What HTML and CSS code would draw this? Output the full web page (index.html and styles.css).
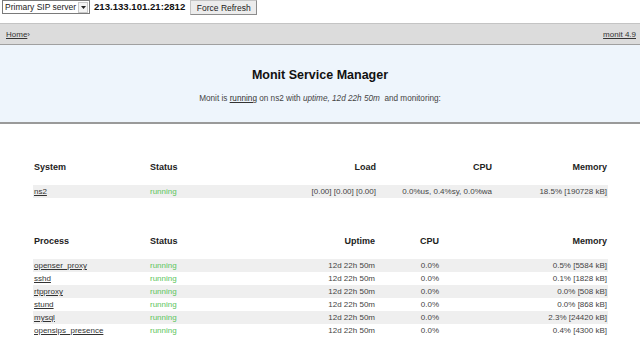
FILE: index.html
```html
<!DOCTYPE html>
<html lang="en">
<head>
    <meta charset="UTF-8">
    <title>Monit Service Manager</title>
    <link rel="stylesheet" href="styles.css">
</head>
<body>

<div class="topbar">
    <div class="server-select">
        <span class="server-name">Primary SIP server</span>
        <span class="select-arrow">
            <svg width="5" height="3" viewBox="0 0 5 3"><path d="M0 0h5L2.5 3z" fill="#222"/></svg>
        </span>
    </div>
    <span class="host">213.133.101.21:2812</span>
    <button class="refresh">Force Refresh</button>
</div>

<div class="nav">
    <span><a href="#">Home</a>&rsaquo;</span>
    <a href="#">monit 4.9</a>
</div>

<div class="hero">
    <h1>Monit Service Manager</h1>
    <p>Monit is <a href="#">running</a> on ns2 with <i>uptime, 12d 22h 50m</i> &nbsp;and monitoring:</p>
</div>

<table class="status system">
    <colgroup>
        <col style="width:116px"><col style="width:111px"><col style="width:117px"><col style="width:116px"><col style="width:115px">
    </colgroup>
    <thead>
        <tr><th>System</th><th>Status</th><th class="num">Load</th><th class="num">CPU</th><th class="num">Memory</th></tr>
    </thead>
    <tbody>
        <tr><td><a href="#">ns2</a></td><td class="ok">running</td><td class="num">[0.00] [0.00] [0.00]</td><td class="num">0.0%us, 0.4%sy, 0.0%wa</td><td class="num">18.5% [190728 kB]</td></tr>
    </tbody>
</table>

<table class="status process">
    <colgroup>
        <col style="width:116px"><col style="width:111px"><col style="width:116px"><col style="width:64px"><col style="width:168px">
    </colgroup>
    <thead>
        <tr><th>Process</th><th>Status</th><th class="num">Uptime</th><th class="num">CPU</th><th class="num">Memory</th></tr>
    </thead>
    <tbody>
        <tr><td><a href="#">openser_proxy</a></td><td class="ok">running</td><td class="num">12d 22h 50m</td><td class="num">0.0%</td><td class="num">0.5% [5584 kB]</td></tr>
        <tr><td><a href="#">sshd</a></td><td class="ok">running</td><td class="num">12d 22h 50m</td><td class="num">0.0%</td><td class="num">0.1% [1828 kB]</td></tr>
        <tr><td><a href="#">rtpproxy</a></td><td class="ok">running</td><td class="num">12d 22h 50m</td><td class="num">0.0%</td><td class="num">0.0% [508 kB]</td></tr>
        <tr><td><a href="#">stund</a></td><td class="ok">running</td><td class="num">12d 22h 50m</td><td class="num">0.0%</td><td class="num">0.0% [868 kB]</td></tr>
        <tr><td><a href="#">mysql</a></td><td class="ok">running</td><td class="num">12d 22h 50m</td><td class="num">0.0%</td><td class="num">2.3% [24420 kB]</td></tr>
        <tr><td><a href="#">opensips_presence</a></td><td class="ok">running</td><td class="num">12d 22h 50m</td><td class="num">0.0%</td><td class="num">0.4% [4300 kB]</td></tr>
    </tbody>
</table>

</body>
</html>
```

FILE: styles.css
```css
body {
    margin: 0;
    font-family: "Liberation Sans", Arial, sans-serif;
    color: #444;
    background-color: #fff;
}
a {
    color: #333;
}
.topbar {
    display: flex;
    align-items: flex-start;
    height: 23px;
    padding-left: 2px;
}
.server-select {
    display: flex;
    align-items: center;
    width: 84px;
    height: 12px;
    border: 1px solid #7a7a7a;
    font-size: 8.5px;
    color: #222;
    padding-left: 2px;
    box-sizing: content-box;
}
.server-name {
    flex: 1;
    white-space: nowrap;
}
.select-arrow {
    display: flex;
    align-items: center;
    justify-content: center;
    width: 8px;
    height: 9px;
    margin-right: 1px;
    background-color: #f4f4f4;
    border: 1px solid #c8c8c8;
}
.host {
    margin-left: 4px;
    font-size: 9.6px;
    font-weight: bold;
    color: #111;
    line-height: 14px;
}
.refresh {
    margin-left: 5px;
    width: 67px;
    height: 15px;
    padding: 0;
    font-family: "Liberation Sans", Arial, sans-serif;
    font-size: 8.5px;
    color: #222;
    background-color: #ececec;
    border: 1px solid #c4c4c4;
    border-right-color: #8c8c8c;
    border-bottom-color: #8c8c8c;
}
.nav {
    display: flex;
    justify-content: space-between;
    align-items: center;
    height: 20px;
    padding: 0 4px 0 6px;
    font-size: 8px;
    color: #333;
    background-color: #dcdcdc;
    border-top: 1px solid #c4c4c4;
    border-bottom: 1px solid #a0a0a0;
}
.hero {
    height: 76px;
    padding-top: 1px;
    background-color: #eef5fc;
    border-bottom: 2px solid #9a9a9a;
    text-align: center;
}
.hero h1 {
    margin: 22px 0 0;
    font-size: 12.5px;
    color: #111;
}
.hero p {
    margin: 12px 0 0;
    font-size: 8.2px;
    color: #444;
}
.status {
    table-layout: fixed;
    border-collapse: collapse;
    width: 575px;
    margin-left: 33px;
    font-size: 8px;
}
.system {
    margin-top: 36px;
}
.process {
    margin-top: 36px;
}
.status th {
    height: 14px;
    padding: 0 1px 11px;
    font-size: 9px;
    color: #222;
    text-align: left;
}
.process th {
    padding-bottom: 11px;
}
.status td {
    height: 13px;
    padding: 0 1px;
    white-space: nowrap;
}
.status .num {
    text-align: right;
}
.status tbody tr:nth-child(odd) {
    background-color: #efefef;
}
.ok {
    color: #5cc55c;
}
```
